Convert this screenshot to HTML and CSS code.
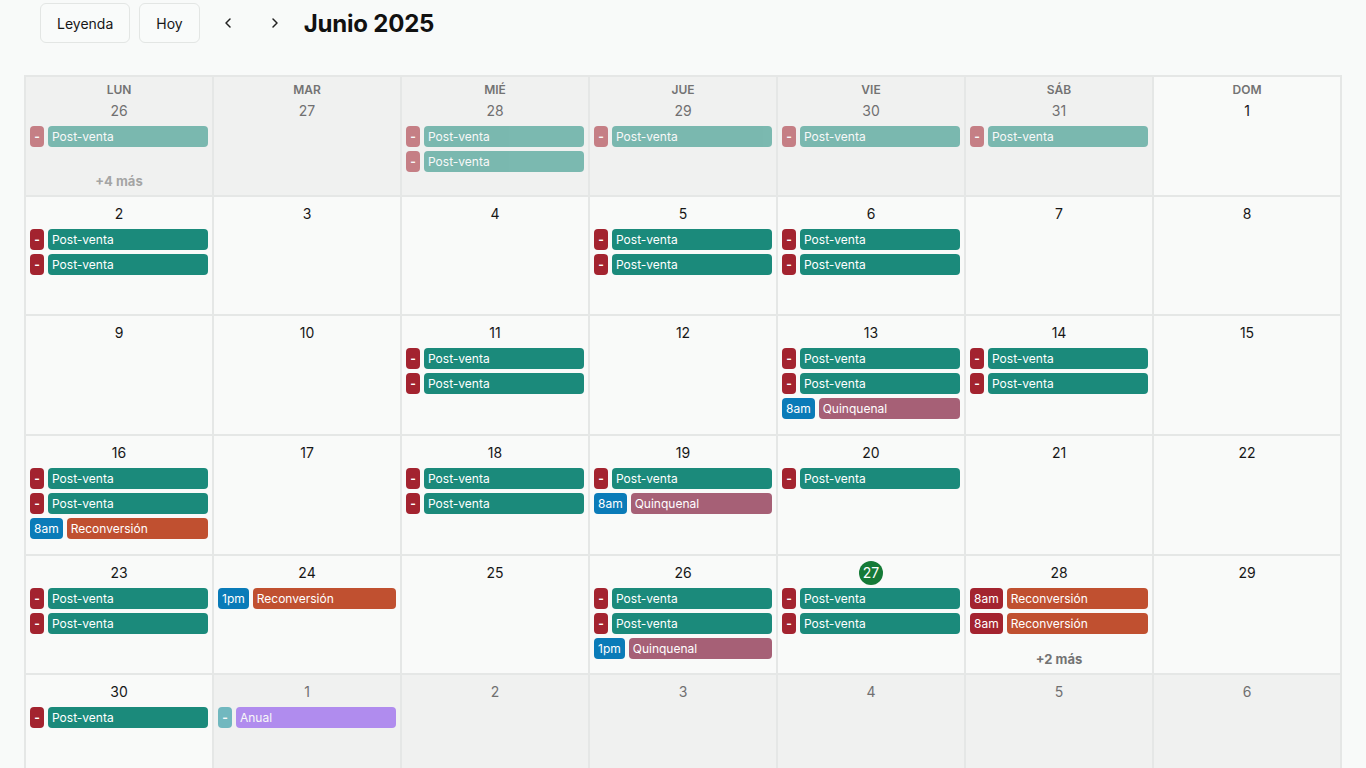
FILE: index.html
```html
<!DOCTYPE html>
<html lang="es">
<head>
<meta charset="utf-8">
<title>Junio 2025</title>
<link rel="stylesheet" href="styles.css">
</head>
<body>
<div class="toolbar">
  <button class="btn">Leyenda</button>
  <button class="btn">Hoy</button>
  <button class="nav" aria-label="Anterior"><svg width="16" height="16" viewBox="0 0 16 16"><polyline points="10,4 6,8 10,12" fill="none" stroke="#222" stroke-width="1.5" stroke-linecap="round" stroke-linejoin="round"/></svg></button>
  <button class="nav" aria-label="Siguiente"><svg width="16" height="16" viewBox="0 0 16 16"><polyline points="6,4 10,8 6,12" fill="none" stroke="#222" stroke-width="1.5" stroke-linecap="round" stroke-linejoin="round"/></svg></button>
  <h1 class="title">Junio 2025</h1>
</div>

<div class="calendar">
  <!-- Week 1 -->
  <div class="cell out">
    <div class="wd">LUN</div><div class="date">26</div>
    <div class="events">
      <div class="ev"><span class="badge dash red">-</span><span class="chip teal">Post-venta</span></div>
    </div>
    <div class="more">+4 más</div>
  </div>
  <div class="cell out"><div class="wd">MAR</div><div class="date">27</div></div>
  <div class="cell out">
    <div class="wd">MIÉ</div><div class="date">28</div>
    <div class="events">
      <div class="ev"><span class="badge dash red">-</span><span class="chip teal">Post-venta</span></div>
      <div class="ev"><span class="badge dash red">-</span><span class="chip teal">Post-venta</span></div>
    </div>
  </div>
  <div class="cell out">
    <div class="wd">JUE</div><div class="date">29</div>
    <div class="events">
      <div class="ev"><span class="badge dash red">-</span><span class="chip teal">Post-venta</span></div>
    </div>
  </div>
  <div class="cell out">
    <div class="wd">VIE</div><div class="date">30</div>
    <div class="events">
      <div class="ev"><span class="badge dash red">-</span><span class="chip teal">Post-venta</span></div>
    </div>
  </div>
  <div class="cell out">
    <div class="wd">SÁB</div><div class="date">31</div>
    <div class="events">
      <div class="ev"><span class="badge dash red">-</span><span class="chip teal">Post-venta</span></div>
    </div>
  </div>
  <div class="cell"><div class="wd">DOM</div><div class="date">1</div></div>

  <!-- Week 2 -->
  <div class="cell">
    <div class="date">2</div>
    <div class="events">
      <div class="ev"><span class="badge dash red">-</span><span class="chip teal">Post-venta</span></div>
      <div class="ev"><span class="badge dash red">-</span><span class="chip teal">Post-venta</span></div>
    </div>
  </div>
  <div class="cell"><div class="date">3</div></div>
  <div class="cell"><div class="date">4</div></div>
  <div class="cell">
    <div class="date">5</div>
    <div class="events">
      <div class="ev"><span class="badge dash red">-</span><span class="chip teal">Post-venta</span></div>
      <div class="ev"><span class="badge dash red">-</span><span class="chip teal">Post-venta</span></div>
    </div>
  </div>
  <div class="cell">
    <div class="date">6</div>
    <div class="events">
      <div class="ev"><span class="badge dash red">-</span><span class="chip teal">Post-venta</span></div>
      <div class="ev"><span class="badge dash red">-</span><span class="chip teal">Post-venta</span></div>
    </div>
  </div>
  <div class="cell"><div class="date">7</div></div>
  <div class="cell"><div class="date">8</div></div>

  <!-- Week 3 -->
  <div class="cell"><div class="date">9</div></div>
  <div class="cell"><div class="date">10</div></div>
  <div class="cell">
    <div class="date">11</div>
    <div class="events">
      <div class="ev"><span class="badge dash red">-</span><span class="chip teal">Post-venta</span></div>
      <div class="ev"><span class="badge dash red">-</span><span class="chip teal">Post-venta</span></div>
    </div>
  </div>
  <div class="cell"><div class="date">12</div></div>
  <div class="cell">
    <div class="date">13</div>
    <div class="events">
      <div class="ev"><span class="badge dash red">-</span><span class="chip teal">Post-venta</span></div>
      <div class="ev"><span class="badge dash red">-</span><span class="chip teal">Post-venta</span></div>
      <div class="ev"><span class="badge blue">8am</span><span class="chip rose">Quinquenal</span></div>
    </div>
  </div>
  <div class="cell">
    <div class="date">14</div>
    <div class="events">
      <div class="ev"><span class="badge dash red">-</span><span class="chip teal">Post-venta</span></div>
      <div class="ev"><span class="badge dash red">-</span><span class="chip teal">Post-venta</span></div>
    </div>
  </div>
  <div class="cell"><div class="date">15</div></div>

  <!-- Week 4 -->
  <div class="cell">
    <div class="date">16</div>
    <div class="events">
      <div class="ev"><span class="badge dash red">-</span><span class="chip teal">Post-venta</span></div>
      <div class="ev"><span class="badge dash red">-</span><span class="chip teal">Post-venta</span></div>
      <div class="ev"><span class="badge blue">8am</span><span class="chip orange">Reconversión</span></div>
    </div>
  </div>
  <div class="cell"><div class="date">17</div></div>
  <div class="cell">
    <div class="date">18</div>
    <div class="events">
      <div class="ev"><span class="badge dash red">-</span><span class="chip teal">Post-venta</span></div>
      <div class="ev"><span class="badge dash red">-</span><span class="chip teal">Post-venta</span></div>
    </div>
  </div>
  <div class="cell">
    <div class="date">19</div>
    <div class="events">
      <div class="ev"><span class="badge dash red">-</span><span class="chip teal">Post-venta</span></div>
      <div class="ev"><span class="badge blue">8am</span><span class="chip rose">Quinquenal</span></div>
    </div>
  </div>
  <div class="cell">
    <div class="date">20</div>
    <div class="events">
      <div class="ev"><span class="badge dash red">-</span><span class="chip teal">Post-venta</span></div>
    </div>
  </div>
  <div class="cell"><div class="date">21</div></div>
  <div class="cell"><div class="date">22</div></div>

  <!-- Week 5 -->
  <div class="cell">
    <div class="date">23</div>
    <div class="events">
      <div class="ev"><span class="badge dash red">-</span><span class="chip teal">Post-venta</span></div>
      <div class="ev"><span class="badge dash red">-</span><span class="chip teal">Post-venta</span></div>
    </div>
  </div>
  <div class="cell">
    <div class="date">24</div>
    <div class="events">
      <div class="ev"><span class="badge blue">1pm</span><span class="chip orange">Reconversión</span></div>
    </div>
  </div>
  <div class="cell"><div class="date">25</div></div>
  <div class="cell">
    <div class="date">26</div>
    <div class="events">
      <div class="ev"><span class="badge dash red">-</span><span class="chip teal">Post-venta</span></div>
      <div class="ev"><span class="badge dash red">-</span><span class="chip teal">Post-venta</span></div>
      <div class="ev"><span class="badge blue">1pm</span><span class="chip rose">Quinquenal</span></div>
    </div>
  </div>
  <div class="cell">
    <div class="date"><span class="today">27</span></div>
    <div class="events">
      <div class="ev"><span class="badge dash red">-</span><span class="chip teal">Post-venta</span></div>
      <div class="ev"><span class="badge dash red">-</span><span class="chip teal">Post-venta</span></div>
    </div>
  </div>
  <div class="cell">
    <div class="date">28</div>
    <div class="events">
      <div class="ev"><span class="badge red">8am</span><span class="chip orange">Reconversión</span></div>
      <div class="ev"><span class="badge red">8am</span><span class="chip orange">Reconversión</span></div>
    </div>
    <div class="more">+2 más</div>
  </div>
  <div class="cell"><div class="date">29</div></div>

  <!-- Week 6 -->
  <div class="cell">
    <div class="date">30</div>
    <div class="events">
      <div class="ev"><span class="badge dash red">-</span><span class="chip teal">Post-venta</span></div>
    </div>
  </div>
  <div class="cell out">
    <div class="date">1</div>
    <div class="events">
      <div class="ev"><span class="badge dash cyan">-</span><span class="chip violet">Anual</span></div>
    </div>
  </div>
  <div class="cell out"><div class="date">2</div></div>
  <div class="cell out"><div class="date">3</div></div>
  <div class="cell out"><div class="date">4</div></div>
  <div class="cell out"><div class="date">5</div></div>
  <div class="cell out"><div class="date">6</div></div>
</div>
</body>
</html>
```

FILE: styles.css
```css
html, body {
  margin: 0;
  padding: 0;
}

body {
  background: #f8faf9;
  font-family: Inter, "Noto Sans", "Liberation Sans", sans-serif;
  color: #171717;
  overflow: hidden;
}

.toolbar {
  display: flex;
  align-items: center;
  gap: 9px;
  padding: 3px 0 0 40px;
  height: 40px;
}

.btn {
  height: 40px;
  box-sizing: border-box;
  padding: 0 16px;
  border: 1px solid #e3e6e4;
  border-radius: 6px;
  background: #f9fbfa;
  font-family: inherit;
  font-size: 14px;
  color: #171717;
  display: flex;
  align-items: center;
}

.nav {
  width: 38px;
  height: 40px;
  padding: 0;
  border: none;
  background: transparent;
  display: flex;
  align-items: center;
  justify-content: center;
}

.title {
  margin: 0 0 0 1px;
  font-size: 24px;
  font-weight: 700;
  color: #111;
  letter-spacing: -0.2px;
}

.calendar {
  margin: 32px 24px 0;
  display: grid;
  grid-template-columns: repeat(7, 1fr);
  grid-auto-rows: 117.7px;
  gap: 2px;
  background: #e5e7e6;
  border: 2px solid #e5e7e6;
}

.cell {
  background: #f9faf9;
  padding: 7px 4px 4px;
  display: flex;
  flex-direction: column;
  min-width: 0;
  overflow: hidden;
}

.cell.out {
  background: #f0f1f0;
}

.wd {
  font-size: 12px;
  font-weight: 600;
  color: #737373;
  text-align: center;
  line-height: 16px;
  margin: -2px 0 3px;
}

.date {
  text-align: center;
  font-size: 14px;
  line-height: 20px;
  height: 20px;
  color: #171717;
}

.out .date {
  color: #707070;
}

.today {
  display: inline-block;
  width: 24px;
  height: 24px;
  line-height: 24px;
  margin-top: -2px;
  border-radius: 50%;
  background: #157a37;
  color: #fff;
}

.events {
  display: flex;
  flex-direction: column;
  gap: 4px;
  margin-top: 5px;
}

.ev {
  display: flex;
  gap: 4px;
  height: 21px;
}

.out .ev {
  opacity: 0.55;
}

.badge {
  border-radius: 4px;
  color: #fff;
  font-size: 12px;
  line-height: 21px;
  text-align: center;
  padding: 0 4px;
  flex: none;
}

.badge.dash {
  width: 14px;
  padding: 0;
  font-weight: 700;
}

.chip {
  flex: 1;
  min-width: 0;
  border-radius: 4px;
  color: #fff;
  font-size: 12px;
  line-height: 21px;
  padding-left: 4px;
  white-space: nowrap;
  overflow: hidden;
}

.red { background: #a3232f; }
.blue { background: #0a7bb8; }
.cyan { background: #0b8a98; }
.teal { background: #1b8a7b; }
.rose { background: #a66076; }
.orange { background: #c05030; }
.violet { background: #7c3aed; }

.more {
  margin-top: auto;
  margin-bottom: 2px;
  text-align: center;
  font-size: 13px;
  font-weight: 700;
  line-height: 16px;
  color: #737373;
}

.out .more {
  opacity: 0.6;
}
```
